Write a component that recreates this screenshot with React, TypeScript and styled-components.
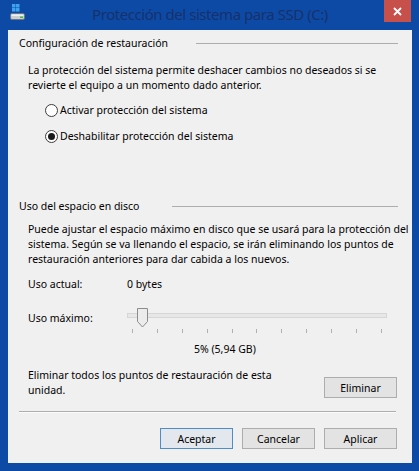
import React from "react";
import styled, { createGlobalStyle } from "styled-components";

const GlobalStyle = createGlobalStyle`
  html, body { margin: 0; padding: 0; background: #0d4aa6; }
  body { font-family: "Noto Sans", "Open Sans", sans-serif; }
`;

const Frame = styled.div`
  width: 419px;
  height: 471px;
  background: #0d4aa6;
  display: flex;
  flex-direction: column;
  box-sizing: border-box;
  padding: 0 7px 8px 8px;
`;

const TitleBar = styled.div`
  height: 30px;
  display: grid;
  grid-template-columns: 1fr auto 1fr;
  align-items: start;
`;

const AppIcon = styled.div`
  padding: 4px 0 0 2px;
  height: 20px;
`;

const Title = styled.div`
  font-family: "Noto Sans", "Open Sans", sans-serif;
  font-size: 15px;
  letter-spacing: -0.45px;
  line-height: 28px;
  color: #17316a;
  white-space: nowrap;
`;

const CloseButton = styled.div`
  justify-self: end;
  width: 27px;
  height: 22px;
  margin-right: 1px;
  background: #c7504b;
  display: flex;
  align-items: center;
  justify-content: center;
`;

const Client = styled.div`
  flex: 1;
  background: #f0f0f0;
  box-sizing: border-box;
  padding: 6px 15px 0 11px;
  display: flex;
  flex-direction: column;
  font-size: 10.5px;
  line-height: 15px;
  color: #000;
`;

const Header = styled.div<{ $mt?: number }>`
  margin-top: ${(p) => p.$mt ?? 0}px;
  display: flex;
  align-items: center;
  white-space: nowrap;
`;

const HeaderLine = styled.div<{ $gap: number }>`
  flex: 1;
  margin-left: ${(p) => p.$gap}px;
  margin-right: -1px;
  height: 0;
  border-top: 1px solid #adadad;
`;

const Para = styled.div<{ $mt: number }>`
  margin-top: ${(p) => p.$mt}px;
  padding-left: 9px;
  white-space: nowrap;
`;

const RadioRow = styled.label<{ $mt: number }>`
  margin-top: ${(p) => p.$mt}px;
  padding-left: 26px;
  display: flex;
  align-items: center;
  gap: 2px;
  white-space: nowrap;
`;

const RadioCircle = styled.span<{ $checked?: boolean }>`
  width: 13px;
  height: 13px;
  box-sizing: border-box;
  border-radius: 50%;
  border: 1px solid #3c3c3c;
  background: #fff;
  display: flex;
  align-items: center;
  justify-content: center;
  &::after {
    content: "";
    display: ${(p) => (p.$checked ? "block" : "none")};
    width: 7px;
    height: 7px;
    border-radius: 50%;
    background: #1a1a1a;
  }
`;

const InfoRow = styled.div<{ $mt: number }>`
  margin-top: ${(p) => p.$mt}px;
  padding-left: 9px;
  display: flex;
  align-items: flex-start;
  white-space: nowrap;
`;

const InfoLabel = styled.div<{ $pt?: number }>`
  width: 99px;
  padding-top: ${(p) => p.$pt ?? 0}px;
`;

const Slider = styled.div`
  width: 260px;
  display: flex;
  flex-direction: column;
`;

const TrackArea = styled.div`
  position: relative;
  height: 23px;
`;

const Track = styled.div`
  position: absolute;
  left: 0;
  right: 0;
  top: 7px;
  height: 5px;
  box-sizing: border-box;
  border: 1px solid #d6d6d6;
  background: #e7e7e7;
`;

const Thumb = styled.svg`
  position: absolute;
  left: 10px;
  top: 2px;
`;

const Ticks = styled.div`
  display: flex;
  justify-content: space-between;
  padding: 0 5px;
`;

const Tick = styled.span`
  width: 1px;
  height: 4px;
  background: #b0b0b0;
`;

const Percent = styled.div`
  margin-top: 9px;
  padding-left: 175px;
  white-space: nowrap;
`;

const DeleteRow = styled.div`
  margin-top: 11px;
  padding-left: 9px;
  display: flex;
  justify-content: space-between;
  align-items: flex-start;
  white-space: nowrap;
`;

const Separator = styled.div`
  margin-top: 13px;
  margin-right: 1px;
  height: 0;
  border-top: 1px solid #adadad;
  border-bottom: 1px solid #fbfbfb;
`;

const ButtonBar = styled.div`
  margin-top: 15px;
  display: flex;
  justify-content: flex-end;
  gap: 9px;
`;

const Button = styled.button<{ $default?: boolean; $mt?: number }>`
  width: 73px;
  height: 21px;
  margin-top: ${(p) => p.$mt ?? 0}px;
  box-sizing: border-box;
  padding: 0;
  font-family: inherit;
  font-size: 10.5px;
  color: #000;
  background: ${(p) => (p.$default ? "#e3e8ee" : "#e3e3e3")};
  border: 1px solid ${(p) => (p.$default ? "#4f8dc9" : "#adadad")};
  border-radius: 0;
`;

function DriveIcon() {
  return (
    <svg width="16" height="17" viewBox="0 0 16 17">
      <rect x="2" y="0" width="3.5" height="3.5" fill="#3ea3ef" />
      <rect x="6" y="0" width="3.5" height="3.5" fill="#3ea3ef" />
      <rect x="2" y="4" width="3.5" height="3.5" fill="#3ea3ef" />
      <rect x="6" y="4" width="3.5" height="3.5" fill="#3ea3ef" />
      <rect x="0.5" y="9.5" width="14" height="6" rx="1.5" fill="#c9cfd4" stroke="#6e7780" />
      <rect x="1.5" y="10.5" width="12" height="1.5" fill="#eef1f3" />
      <rect x="10" y="12.5" width="3" height="1.5" fill="#3fc23a" />
    </svg>
  );
}

export default function App() {
  return (
    <Frame>
      <GlobalStyle />
      <TitleBar>
        <AppIcon>
          <DriveIcon />
        </AppIcon>
        <Title>Protección del sistema para SSD (C:)</Title>
        <CloseButton>
          <svg width="9" height="9" viewBox="0 0 9 9">
            <path d="M1 1 L8 8 M8 1 L1 8" stroke="#fff" strokeWidth="1.8" />
          </svg>
        </CloseButton>
      </TitleBar>
      <Client>
        <Header>
          Configuración de restauración
          <HeaderLine $gap={28} />
        </Header>
        <Para $mt={12}>
          La protección del sistema permite deshacer cambios no deseados si se
          <br />
          revierte el equipo a un momento dado anterior.
        </Para>
        <RadioRow $mt={10}>
          <RadioCircle />
          Activar protección del sistema
        </RadioRow>
        <RadioRow $mt={11}>
          <RadioCircle $checked />
          Deshabilitar protección del sistema
        </RadioRow>
        <Header $mt={55}>
          Uso del espacio en disco
          <HeaderLine $gap={33} />
        </Header>
        <Para $mt={8}>
          Puede ajustar el espacio máximo en disco que se usará para la protección del
          <br />
          sistema. Según se va llenando el espacio, se irán eliminando los puntos de
          <br />
          restauración anteriores para dar cabida a los nuevos.
        </Para>
        <InfoRow $mt={10}>
          <InfoLabel>Uso actual:</InfoLabel>
          <div>0 bytes</div>
        </InfoRow>
        <InfoRow $mt={14}>
          <InfoLabel $pt={5}>Uso máximo:</InfoLabel>
          <Slider>
            <TrackArea>
              <Track />
              <Thumb width="11" height="20" viewBox="0 0 11 20">
                <path d="M0.5 0.5 H10.5 V13.5 L5.5 19 L0.5 13.5 Z" fill="#ececec" stroke="#8c8c8c" />
              </Thumb>
            </TrackArea>
            <Ticks>
              {Array.from({ length: 11 }).map((_, i) => (
                <Tick key={i} />
              ))}
            </Ticks>
          </Slider>
        </InfoRow>
        <Percent>5% (5,94 GB)</Percent>
        <DeleteRow>
          <div>
            Eliminar todos los puntos de restauración de esta
            <br />
            unidad.
          </div>
          <Button $mt={9}>Eliminar</Button>
        </DeleteRow>
        <Separator />
        <ButtonBar>
          <Button $default>Aceptar</Button>
          <Button>Cancelar</Button>
          <Button>Aplicar</Button>
        </ButtonBar>
      </Client>
    </Frame>
  );
}
